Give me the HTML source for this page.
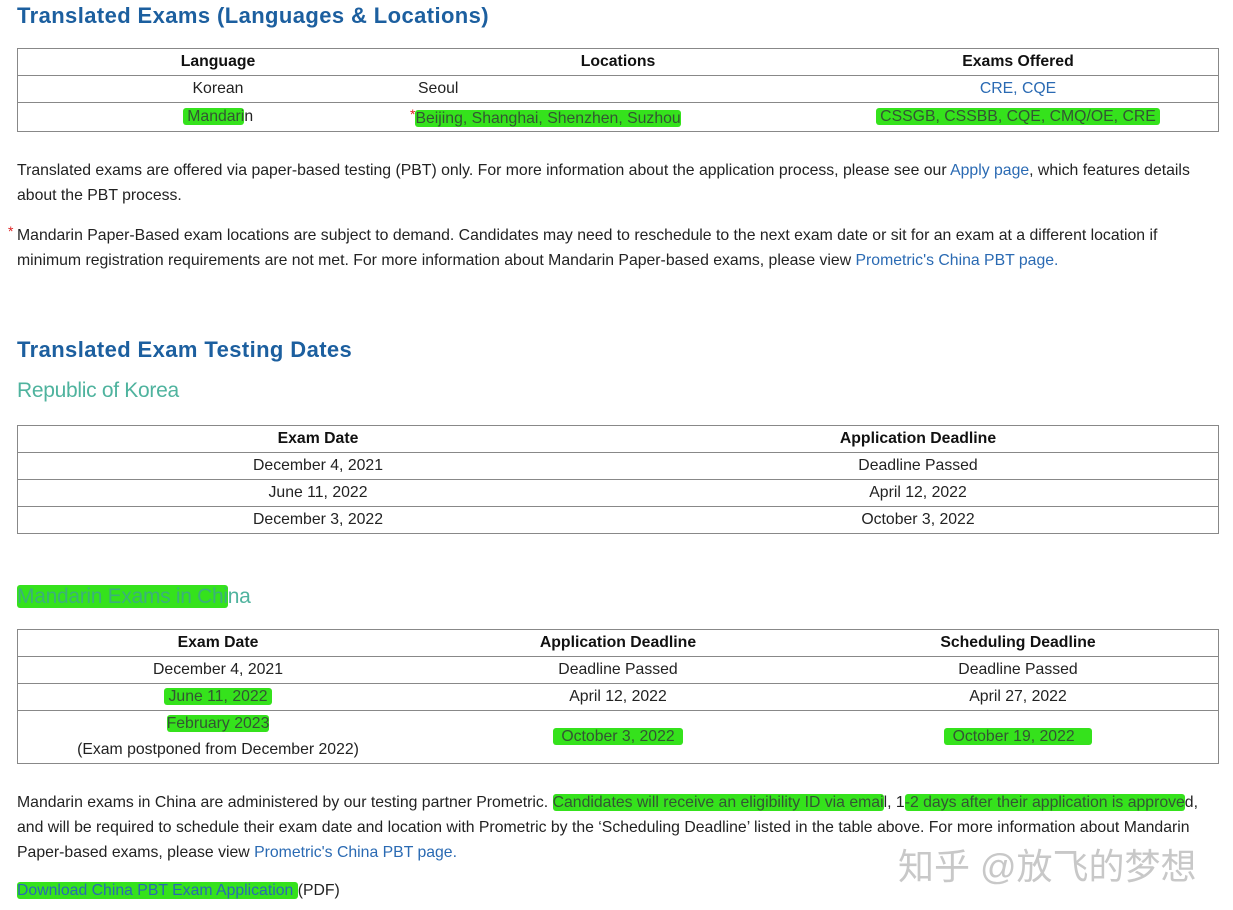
<!DOCTYPE html>
<html><head><meta charset="utf-8"><style>
body{margin:0;width:1233px;height:910px;background:#fff;position:relative;overflow:hidden;font-family:"Liberation Sans",Arial,sans-serif;font-size:15.8px;color:#222}
.a{position:absolute;white-space:nowrap}
h1{position:absolute;margin:0;font-size:22px;font-weight:bold;color:#1c5f9f;left:17px;letter-spacing:0.4px}
h2{position:absolute;margin:0;font-size:21px;font-weight:normal;color:#4fb39e;left:17px;letter-spacing:-0.3px}
table{position:absolute;left:17px;width:1202px;border-collapse:collapse;border:1px solid #888}
td,th{border-top:1px solid #888;text-align:center;padding:0;height:26px;font-size:15.8px}
th{font-weight:bold;color:#111}
.hl{background:#35e21c;border-radius:3px;color:#335533}
a{color:#2a6ab3;text-decoration:none}
.st{color:#d22;font-size:14px;vertical-align:4px}
p{position:absolute;margin:0;left:17px;width:1210px;line-height:25px;font-size:15.8px;white-space:nowrap}
</style></head><body>
<h1 style="top:3px">Translated Exams (Languages &amp; Locations)</h1>
<table style="top:48px">
<tr><th style="width:400px">Language</th><th style="width:400px">Locations</th><th>Exams Offered</th></tr>
<tr><td>Korean</td><td style="text-align:left">Seoul</td><td><a>CRE, CQE</a></td></tr>
<tr><td style="height:28px"><span class="hl">&nbsp;Mandari</span>n</td><td style="text-align:left;padding-left:0"><span class="st" style="margin-left:-8px">*</span><span class="hl">Beijing, Shanghai, Shenzhen, Suzhou</span></td><td><span class="hl">&nbsp;CSSGB, CSSBB, CQE, CMQ/OE, CRE&nbsp;</span></td></tr>
</table>
<p style="top:158px">Translated exams are offered via paper-based testing (PBT) only. For more information about the application process, please see our <a>Apply page</a>, which features details<br>about the PBT process.</p>
<p style="top:223px"><span class="st" style="position:absolute;left:-9px;top:-4px">*</span>Mandarin Paper-Based exam locations are subject to demand. Candidates may need to reschedule to the next exam date or sit for an exam at a different location if<br>minimum registration requirements are not met. For more information about Mandarin Paper-based exams, please view <a>Prometric's China PBT page.</a></p>
<h1 style="top:337px">Translated Exam Testing Dates</h1>
<h2 style="top:379px">Republic of Korea</h2>
<table style="top:425px">
<tr><th style="width:600px">Exam Date</th><th>Application Deadline</th></tr>
<tr><td>December 4, 2021</td><td>Deadline Passed</td></tr>
<tr><td>June 11, 2022</td><td>April 12, 2022</td></tr>
<tr><td>December 3, 2022</td><td>October 3, 2022</td></tr>
</table>
<h2 style="top:585px"><span class="hl" style="color:#3bb07a;background:#35e21c">Mandarin Exams in Chi</span>na</h2>
<table style="top:629px">
<tr><th style="width:400px">Exam Date</th><th style="width:400px">Application Deadline</th><th>Scheduling Deadline</th></tr>
<tr><td>December 4, 2021</td><td>Deadline Passed</td><td>Deadline Passed</td></tr>
<tr><td><span class="hl">&nbsp;June 11, 2022&nbsp;</span></td><td>April 12, 2022</td><td>April 27, 2022</td></tr>
<tr><td style="height:52px;line-height:26px"><span class="hl">February 2023</span><br>(Exam postponed from December 2022)</td><td><span class="hl">&nbsp;&nbsp;October 3, 2022&nbsp;&nbsp;</span></td><td><span class="hl">&nbsp;&nbsp;October 19, 2022&nbsp;&nbsp;&nbsp;&nbsp;</span></td></tr>
</table>
<p style="top:790px">Mandarin exams in China are administered by our testing partner Prometric. <span class="hl">Candidates will receive an eligibility ID via emai</span>l, 1<span class="hl">-2 days after their application is approve</span>d,<br>and will be required to schedule their exam date and location with Prometric by the ‘Scheduling Deadline’ listed in the table above. For more information about Mandarin<br>Paper-based exams, please view <a>Prometric's China PBT page.</a></p>
<p style="top:878px"><a class="hl" style="color:#2a6ab3">Download China PBT Exam Application </a>(PDF)</p>
<div class="a" style="left:898px;top:838px;font-size:36px;color:#c8c8c8;font-family:'Liberation Sans','Noto Sans CJK SC',sans-serif">知乎 @放飞的梦想</div>
</body></html>
